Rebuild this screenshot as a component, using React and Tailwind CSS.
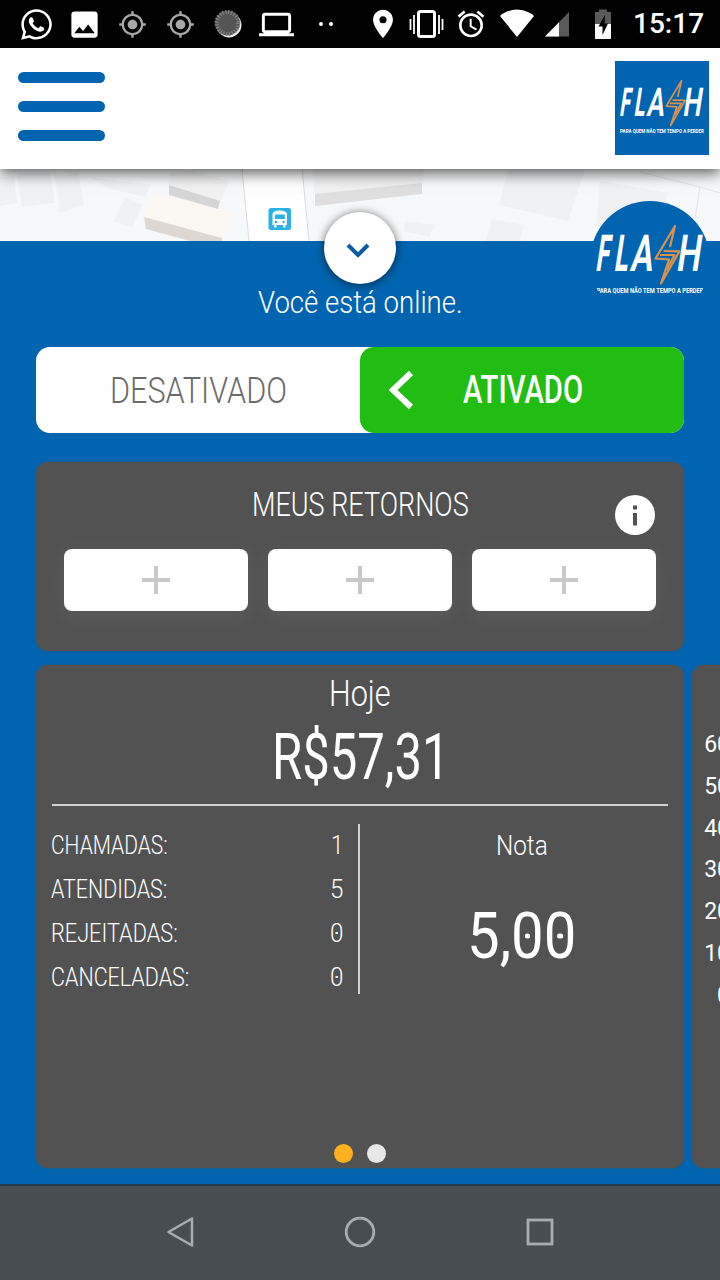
import { useLayoutEffect, useRef, useState } from "react";
import { FaWhatsapp } from "react-icons/fa";
import {
  MdAlarm,
  MdGpsFixed,
  MdImage,
  MdLaptop,
  MdLocationOn,
} from "react-icons/md";

const stats = [
  { label: "CHAMADAS:", width: 117, value: "1", valueWidth: 12 },
  { label: "ATENDIDAS:", width: 116, value: "5", valueWidth: 13 },
  { label: "REJEITADAS:", width: 127, value: "0", valueWidth: 13 },
  { label: "CANCELADAS:", width: 138, value: "0", valueWidth: 13 },
];

const axis = ["60", "50", "40", "30", "20", "10", "0"];

// Squeezes its text to the given width, for the narrow display lettering
function Narrow({ width, className = "", children }) {
  const ref = useRef(null);
  const [scale, setScale] = useState(0.75);

  useLayoutEffect(() => {
    setScale(width / ref.current.offsetWidth);
  }, [width]);

  return (
    <span className={`flex shrink-0 leading-none ${className}`} style={{ width }}>
      <span
        ref={ref}
        className="shrink-0 origin-left whitespace-nowrap"
        style={{ transform: `scaleX(${scale})` }}
      >
        {children}
      </span>
    </span>
  );
}

// Zero with a dot in the middle
function Zero() {
  return (
    <span className="relative inline-block">
      0
      <span className="absolute left-1/2 top-1/2 h-[0.08em] w-[0.1em] -translate-x-1/2 -translate-y-1/2 rounded-full bg-white" />
    </span>
  );
}

function FlashLogo({ className }) {
  return (
    <svg viewBox="0 0 120 120" className={className}>
      <g fill="#fff" fontFamily="Roboto, 'Liberation Sans', sans-serif">
        <g transform="translate(7 70) skewX(-8.6)" fontSize="51" fontWeight="600">
          <text x="-1.9" y="0" fontWeight="800" textLength="13" lengthAdjust="spacingAndGlyphs">
            F
          </text>
          <text x="16.6" y="0" fontWeight="800" textLength="13.6" lengthAdjust="spacingAndGlyphs">
            L
          </text>
          <text x="32.5" y="0" textLength="22.4" lengthAdjust="spacingAndGlyphs">
            A
          </text>
          <text x="78.5" y="0" textLength="24" lengthAdjust="spacingAndGlyphs">
            H
          </text>
        </g>
        <text
          x="6.5"
          y="92"
          fontSize="8"
          fontWeight="700"
          textLength="107"
          lengthAdjust="spacingAndGlyphs"
        >
          PARA QUEM NÃO TEM TEMPO A PERDER
        </text>
      </g>
      <g fill="none" stroke="#d8924e" strokeWidth="2.2" strokeLinejoin="round">
        <path d="M80 46 85 25 65.5 57.5 79 58.5 71 82.5 89.5 50.300 73.500 50" />
        <path d="M70 54 84.500 54 76.500 69" />
      </g>
    </svg>
  );
}

function StatusBar() {
  return (
    <div className="flex h-12 shrink-0 items-center bg-black pl-3 text-white">
      <div className="flex w-12 justify-center">
        <FaWhatsapp size={35} />
      </div>
      <div className="flex w-12 justify-center">
        <MdImage size={35} />
      </div>
      <div className="flex w-12 justify-center text-[#a8a8a8]">
        <MdGpsFixed size={29} />
      </div>
      <div className="flex w-12 justify-center text-[#a8a8a8]">
        <MdGpsFixed size={29} />
      </div>
      <svg viewBox="0 0 48 48" className="h-12 w-12">
        <circle cx="25" cy="25" r="12.500" fill="#eee" />
        <circle cx="23.500" cy="23" r="12.500" fill="#555" />
        <circle
          cx="23.500"
          cy="23"
          r="11"
          fill="none"
          stroke="#858585"
          strokeWidth="4"
          strokeDasharray="1.200 1.700"
        />
      </svg>
      <div className="flex w-12 justify-center">
        <MdLaptop size={35} />
      </div>
      <div className="mr-[11px] flex w-[52px] justify-center gap-1.5">
        <span className="size-1 rounded-full bg-white" />
        <span className="size-1 rounded-full bg-white" />
      </div>
      <div className="-ml-0.5 flex w-11 justify-center">
        <MdLocationOn size={34} />
      </div>
      <svg viewBox="0 0 44 48" className="h-12 w-11">
        <rect x="13.500" y="11.500" width="16" height="25" rx="2" fill="none" stroke="#fff" strokeWidth="3" />
        <path d="M9 15V34M5.500 19V30M34 15V34M37.500 19V30" stroke="#fff" strokeWidth="1.800" />
      </svg>
      <div className="flex w-11 justify-center">
        <MdAlarm size={32} />
      </div>
      <svg viewBox="0 0 44 48" className="h-12 w-11">
        <path d="M24 37 7 16Q8 14 12 12.500Q24 6.500 36 12.500Q40 14 41 16Z" fill="#fff" />
      </svg>
      <svg viewBox="0 0 44 48" className="h-12 w-11">
        <path d="M8 36.500 32 12V36.500Z" fill="#5a5a5a" />
        <path d="M8 36.500 22 22.200V36.500Z" fill="#fff" />
      </svg>
      <svg viewBox="0 0 44 48" className="h-12 w-11">
        <path d="M14 12H18V9.500H26V12H30V24H14Z" fill="#5a5a5a" />
        <path d="M14 24H30V39H14Z" fill="#fff" />
        <path d="M24 15 17.500 26.500H21.500V35L27 23.500H23.500Z" fill="#000" />
      </svg>
      <Narrow width={71} className="ml-2 font-[Roboto,sans-serif] text-[28px] font-medium">
        15:17
      </Narrow>
    </div>
  );
}

function Header() {
  return (
    <header className="relative z-10 flex h-[121px] shrink-0 items-start justify-between bg-white pl-[18px] pr-[11px] shadow-[0_4px_14px_rgba(0,0,0,0.65)]">
      <button className="flex flex-col gap-[18px] pt-6">
        <span className="h-[11px] w-[87px] rounded-full bg-[#0064b0]" />
        <span className="h-[11px] w-[87px] rounded-full bg-[#0064b0]" />
        <span className="h-[11px] w-[87px] rounded-full bg-[#0064b0]" />
      </button>
      <div className="mt-[13px] flex size-[94px] bg-[#0064b0]">
        <FlashLogo className="size-full" />
      </div>
    </header>
  );
}

function MapStrip() {
  return (
    <svg viewBox="0 0 720 72" className="h-[72px] w-full shrink-0 bg-[#f7f8f9]">
      <g fill="#f0f1f3">
        <path d="M0 8H14L17 34 0 37Z" />
        <path d="M17 4H50L55 34 22 38Z" />
        <path d="M55 8 78 4 84 36 60 44Z" />
        <path d="M90 8 150 16 146 28 110 20Z" />
        <path d="M125 28 143 36 132 58 114 52Z" />
        <path d="M509 0H585L568 52 499 36Z" />
        <path d="M492 50 524 56 519 72H486Z" />
        <path d="M600 12 668 24 660 50 596 58Z" />
        <path d="M405 52 434 56 430 68 404 62Z" />
      </g>
      <path d="M242 0H302L309 72H249Z" fill="#fefefe" />
      <path d="M242 0 249 72M302 0 309 72" stroke="#dcdcde" fill="none" />
      <path d="M170 4 190 2 229 12 220 33 169 16Z" fill="#f1f1f1" />
      <path d="M169 16 220 32 218 40 169 26Z" fill="#d6d6d6" />
      <path d="M312 0H424L422 15 315 26Z" fill="#f1f1f1" />
      <path d="M315 25 422 14V25L315 37Z" fill="#dfdfdf" />
      <path d="M153 23 232 44 222 72 144 48Z" fill="#fbf8f4" />
      <path d="M144 48 222 69V72H190L146 60Z" fill="#ded8d5" />
      <path d="M640 3 700 18 720 24M700 18 695 50" stroke="#e3e4e6" fill="none" />
      <rect x="268.500" y="39" width="22.500" height="22" rx="2.500" fill="#2bb1e3" />
      <path
        d="M272.500 45Q273 41.500 279.700 41.500T287 45V56H285.500V58.500H283V56H276.500V58.500H274V56H272.500Z"
        fill="#fff"
      />
      <path d="M275 45.500H284.800V50H275Z" fill="#2bb1e3" />
      <circle cx="276" cy="53" r="1.200" fill="#2bb1e3" />
      <circle cx="283.500" cy="53" r="1.200" fill="#2bb1e3" />
    </svg>
  );
}

function StatusToggle() {
  return (
    <div className="mt-[27px] flex h-[86px] shrink-0 rounded-[14px] bg-white">
      <button className="flex w-1/2 items-center justify-center text-[#6b6b6b]">
        <Narrow width={177} className="text-[37px]">
          DESATIVADO
        </Narrow>
      </button>
      <button className="flex w-1/2 items-center rounded-[14px] bg-[#22bd12] pl-7 text-white">
        <svg viewBox="0 0 26 40" className="mr-[49px] h-10 w-[26px]">
          <path d="M23 3 5 20 23 37" fill="none" stroke="#fff" strokeWidth="6" />
        </svg>
        <Narrow width={120} className="text-[38px] font-medium">
          ATIVADO
        </Narrow>
      </button>
    </div>
  );
}

function Returns() {
  return (
    <section className="relative mt-[29px] flex h-[189px] shrink-0 flex-col items-center rounded-xl bg-[#525252] px-7 shadow-[0_0_2px_#525252]">
      <div className="flex h-[87px] items-center pb-0.5">
        <Narrow width={217} className="text-[33px]">
          MEUS RETORNOS
        </Narrow>
      </div>
      <div className="absolute right-[29px] top-[33px] size-10 rounded-full bg-white">
        <svg viewBox="0 0 40 40" className="size-full">
          <path d="M18 10.500H22V14.500H18ZM18 18H22V30.500H18Z" fill="#525252" />
        </svg>
      </div>
      <div className="flex w-full gap-5">
        {[0, 1, 2].map((slot) => (
          <button
            key={slot}
            className="flex h-[62px] flex-1 items-center justify-center rounded-lg bg-white shadow-[0_4px_20px_rgba(255,255,255,0.07)]"
          >
            <svg viewBox="0 0 28 28" className="size-7">
              <path d="M14 0V28M0 14H28" stroke="#c9c9c9" strokeWidth="4" />
            </svg>
          </button>
        ))}
      </div>
    </section>
  );
}

function TodayCard() {
  return (
    <section className="flex w-[648px] shrink-0 flex-col rounded-xl bg-[#525252] px-4 shadow-[0_0_2px_#525252]">
      <div className="flex h-14 items-center justify-center pt-0.5">
        <Narrow width={62} className="text-[36px]">
          Hoje
        </Narrow>
      </div>
      <div className="flex h-[70px] items-center justify-center pt-0.5 pl-0.5">
        <Narrow width={178} className="text-[65px] font-normal">
          R$57,31
        </Narrow>
      </div>
      <div className="mt-[13px] h-0.5 bg-[#d0d2d0]" />
      <div className="mt-[18px] flex h-[170px]">
        <div className="-ml-px flex w-[309px] flex-col border-r-2 border-[#d0d2d0] pr-[15px]">
          {stats.map((row) => (
            <div
              key={row.label}
              className="flex h-11 shrink-0 items-center justify-between pb-[3px]"
            >
              <Narrow width={row.width} className="text-[26px]">
                {row.label}
              </Narrow>
              <Narrow width={row.valueWidth} className="text-[26px]">
                {row.value === "0" ? <Zero /> : row.value}
              </Narrow>
            </div>
          ))}
        </div>
        <div className="flex flex-1 flex-col items-center pr-[5px] pl-5">
          <div className="flex h-11 items-center">
            <Narrow width={52} className="text-[28px]">
              Nota
            </Narrow>
          </div>
          <div className="mt-[33px] flex h-[70px] items-center">
            <Narrow width={109} className="text-[65px] font-normal">
              5,
              <Zero />
              <Zero />
            </Narrow>
          </div>
        </div>
      </div>
      <div className="mt-auto flex justify-center gap-3.5 pb-[5px]">
        <span className="size-[19px] rounded-full bg-[#ffb01f]" />
        <span className="size-[19px] rounded-full bg-[#e8e8e8]" />
      </div>
    </section>
  );
}

function ChartCard() {
  return (
    <section className="flex w-[648px] shrink-0 flex-col rounded-xl bg-[#525252] pl-3 pt-[59px] font-[Roboto,sans-serif] text-[23px] font-normal shadow-[0_0_2px_#525252]">
      {axis.map((tick) => (
        <span key={tick} className="h-[41.800px] w-[26px] text-right leading-[42px]">
          {tick}
        </span>
      ))}
    </section>
  );
}

function NavBar() {
  return (
    <nav className="flex h-24 shrink-0 items-center justify-center gap-[148px] border-t-2 border-[#26394a] bg-[#464d53] pb-0.5">
      <svg viewBox="0 0 32 32" className="size-8">
        <path d="M28 2.500V29.500L4.500 16Z" fill="none" stroke="#a7adb1" strokeWidth="2.500" strokeLinejoin="round" />
      </svg>
      <svg viewBox="0 0 32 32" className="size-8">
        <circle cx="16" cy="16" r="13.800" fill="none" stroke="#a7adb1" strokeWidth="2.800" />
      </svg>
      <svg viewBox="0 0 32 32" className="size-8">
        <rect x="4" y="4" width="24" height="24" fill="none" stroke="#a7adb1" strokeWidth="2.800" />
      </svg>
    </nav>
  );
}

export default function App() {
  return (
    <div className="flex h-screen w-[720px] flex-col overflow-hidden bg-[#0064b0] font-[Roboto,sans-serif] font-light text-white">
      <StatusBar />
      <Header />
      <MapStrip />
      <main className="relative flex min-h-0 flex-1 flex-col px-9">
        <button className="absolute -top-[29px] left-[324px] flex size-[72px] items-center justify-center rounded-full bg-white shadow-[0_1px_10px_rgba(0,0,0,0.6)]">
          <svg viewBox="0 0 28 20" className="mr-1 mt-1.5 h-5 w-7">
            <path d="M4 4 14 14 24 4" fill="none" stroke="#0f5c9c" strokeWidth="4" />
          </svg>
        </button>
        <div className="absolute -top-10 left-[590px] size-[120px] overflow-hidden rounded-full bg-[#0064b0]">
          <FlashLogo className="size-full" />
        </div>
        <div className="mt-11 flex h-[35px] shrink-0 items-center justify-center pb-0.5">
          <Narrow width={205} className="text-[32px]">
            Você está online.
          </Narrow>
        </div>
        <StatusToggle />
        <Returns />
        <div className="mt-3.5 flex h-[503px] shrink-0 gap-2">
          <TodayCard />
          <ChartCard />
        </div>
      </main>
      <NavBar />
    </div>
  );
}
